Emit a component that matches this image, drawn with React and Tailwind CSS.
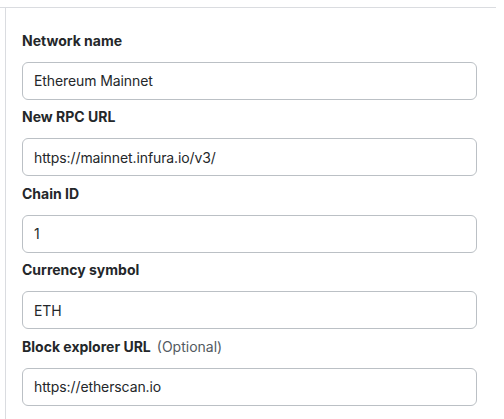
const FIELDS = [
  { label: "Network name", value: "Ethereum Mainnet" },
  { label: "New RPC URL", value: "https://mainnet.infura.io/v3/" },
  { label: "Chain ID", value: "1" },
  { label: "Currency symbol", value: "ETH" },
  { label: "Block explorer URL", value: "https://etherscan.io", optional: true },
];

const Field = ({ label, value, optional }) => (
  <div className="flex flex-col">
    <label className="h-5 mt-[7px] mb-[11.5px] flex items-center text-[14px] font-bold text-[#24272a]">
      {label}
      {optional && (
        <span className="ml-[6px] font-normal text-[#535a61]">(Optional)</span>
      )}
    </label>
    <input
      type="text"
      defaultValue={value}
      className="h-[38px] w-full rounded-[6px] border border-[#bbc0c5] bg-white px-[11px] text-[14px] tracking-[-0.1px] text-[#24272a] outline-none"
    />
  </div>
);

export default function App() {
  return (
    <div
      className="h-[419px] w-[504px] overflow-hidden bg-white pt-[7px]"
      style={{ fontFamily: "Inter, 'Liberation Sans', sans-serif" }}
    >
      <div className="w-[496px] border-t border-[#dadce0]">
        <div className="ml-[5px] h-[420px] border-l border-[#dadce0] pl-[16px] pr-[19px] pt-[15px]">
          {FIELDS.map((f) => (
            <Field key={f.label} {...f} />
          ))}
        </div>
      </div>
    </div>
  );
}
